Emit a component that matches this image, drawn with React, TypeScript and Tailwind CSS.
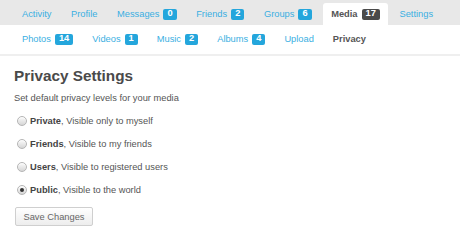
import React from "react";

const blue = "text-[#3aafe2]";

function Badge({ n, dark }: { n: string; dark?: boolean }) {
  return (
    <span
      className={
        "ml-[4px] inline-flex h-[11px] items-center rounded-[2px] px-[4px] text-[9.3px] font-bold leading-none text-white " +
        (dark ? "bg-[#4a4a4a]" : "bg-[#24a6dc]")
      }
    >
      {n}
    </span>
  );
}

function TopItem({ label, badge, active }: { label: string; badge?: string; active?: boolean }) {
  return (
    <div
      className={
        "flex h-[22px] items-center px-[8px] " +
        (active ? "rounded-t-[3px] bg-white font-bold text-[#555]" : blue)
      }
    >
      <span>{label}</span>
      {badge !== undefined && <Badge n={badge} dark={active} />}
    </div>
  );
}

function SubItem({ label, badge, active }: { label: string; badge?: string; active?: boolean }) {
  return (
    <div className={"flex items-center px-[8px] " + (active ? "font-bold text-[#555]" : blue)}>
      <span>{label}</span>
      {badge !== undefined && <Badge n={badge} />}
    </div>
  );
}

function Radio({ checked, title, desc }: { checked?: boolean; title: string; desc: string }) {
  return (
    <div className="flex h-[23px] items-center">
      <span className="ml-[3px] mr-[3px] flex h-[10px] w-[10px] items-center justify-center rounded-full border border-[#b5b5b5] bg-gradient-to-b from-[#fbfbfb] to-[#d6d6d6] shadow-[inset_0_1px_1px_rgba(255,255,255,0.8)]">
        {checked && <span className="h-[4px] w-[4px] rounded-full bg-[#333]" />}
      </span>
      <span className="text-[9.3px] text-[#555]">
        <b className="text-[#444]">{title}</b>, {desc}
      </span>
    </div>
  );
}

export default function App() {
  return (
    <div
      className="h-[236px] w-[460px] overflow-hidden bg-white text-[9.3px] leading-[12px]"
      style={{ fontFamily: '"Liberation Sans", Arial, sans-serif' }}
    >
      <div className="flex h-[25px] items-end gap-[3.6px] bg-[#e8e8e8] pl-[14px]">
        <TopItem label="Activity" />
        <TopItem label="Profile" />
        <TopItem label="Messages" badge="0" />
        <TopItem label="Friends" badge="2" />
        <TopItem label="Groups" badge="6" />
        <TopItem label="Media" badge="17" active />
        <TopItem label="Settings" />
      </div>
      <div className="flex h-[31px] items-stretch gap-[3px] border-b-2 border-[#efefef] pb-[1px] pl-[14px]">
        <SubItem label="Photos" badge="14" />
        <SubItem label="Videos" badge="1" />
        <SubItem label="Music" badge="2" />
        <SubItem label="Albums" badge="4" />
        <SubItem label="Upload" />
        <SubItem label="Privacy" active />
      </div>
      <div className="pl-[14px]">
        <h1 className="mt-[10px] text-[15.3px] font-bold leading-[20px] text-[#4a4a4a]">Privacy Settings</h1>
        <p className="mt-[6px] text-[9.3px] leading-[12px] text-[#555]">Set default privacy levels for your media</p>
        <div className="mt-[5.5px] flex flex-col">
          <Radio title="Private" desc="Visible only to myself" />
          <Radio title="Friends" desc="Visible to my friends" />
          <Radio title="Users" desc="Visible to registered users" />
          <Radio checked title="Public" desc="Visible to the world" />
        </div>
        <button className="ml-[1px] mt-[5.5px] flex h-[19px] w-[78px] items-center justify-center rounded-[2px] border border-[#cfcfcf] bg-gradient-to-b from-[#ffffff] to-[#ededed] text-[9.3px] text-[#666]">
          Save Changes
        </button>
      </div>
    </div>
  );
}
